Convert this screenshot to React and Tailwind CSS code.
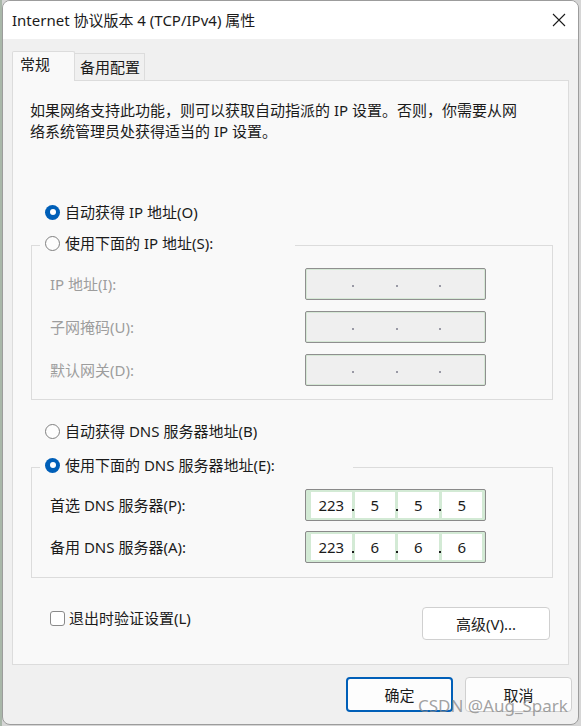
import React from 'react';

const font = "font-['Noto_Sans','Noto_Sans_CJK_SC',sans-serif]";

// Windows 11 style radio
const Radio = ({ checked }) =>
  checked ? (
    <span className="flex h-[15px] w-[15px] shrink-0 items-center justify-center rounded-full bg-[#005fb8]">
      <span className="h-[6px] w-[6px] rounded-full bg-white" />
    </span>
  ) : (
    <span className="h-[15px] w-[15px] shrink-0 rounded-full border border-[#808080] bg-[#fdfdfd]" />
  );

const RadioRow = ({ checked, label }) => (
  <div className="flex h-[22px] items-center gap-[5px]">
    <Radio checked={checked} />
    <span className="whitespace-nowrap leading-[22px] text-[#1b1b1b]">{label}</span>
  </div>
);

// IPv4 address box, four segments split by dots
const IpBox = ({ parts, disabled }) => {
  if (disabled) {
    return (
      <div className="flex h-[32px] w-[181px] items-center rounded-[2px] border border-[#8f8f8f] bg-[#efefef] pl-[5px] pr-[3px] shadow-[inset_0_0_0_1px_#d6e8d6]">
        {[0, 1, 2, 3].map((i) => (
          <React.Fragment key={i}>
            <span className="flex-1" />
            {i < 3 && <span className="mt-[4px] h-[2px] w-[2px] rounded-full bg-[#7d7d8c]" />}
          </React.Fragment>
        ))}
      </div>
    );
  }
  return (
    <div className="flex h-[32px] w-[181px] items-stretch rounded-[2px] border border-[#8a8a8a] bg-[#d3ead5] py-[2px] pl-[5px] pr-[3px]">
      {parts.map((p, i) => (
        <React.Fragment key={i}>
          <span className="flex flex-1 items-center justify-center bg-white leading-[20px] text-[#1b1b1b]">{p}</span>
          {i < 3 && (
            <span className="flex w-[3px] items-end justify-center pb-[7px]">
              <span className="h-[2px] w-[2px] bg-[#1b1b1b]" />
            </span>
          )}
        </React.Fragment>
      ))}
    </div>
  );
};

const FieldRow = ({ label, parts, disabled }) => (
  <div className="flex items-center">
    <span className={`w-[273px] whitespace-nowrap pl-[18px] leading-[22px] ${disabled ? 'text-[#9d9d9d]' : 'text-[#1b1b1b]'}`}>
      {label}
    </span>
    <IpBox parts={parts} disabled={disabled} />
  </div>
);

export default function App() {
  return (
    <div className={`relative h-[726px] w-[581px] overflow-hidden bg-[#d6d6d6] text-[15px] ${font}`}>
      <div className="absolute left-0 top-0 h-full w-[2px] bg-[#a9b7a9]" />
      <div className="ml-[2px] flex h-[725px] w-[577px] flex-col overflow-hidden rounded-[8px] border border-[#9c9c9c] bg-[#f0f0f0]">
        {/* title bar */}
        <div className="flex h-[38px] shrink-0 items-center justify-between bg-white pl-[9px] pr-[11px]">
          <span className="leading-[20px] text-[#1b1b1b]">Internet 协议版本 4 (TCP/IPv4) 属性</span>
          <svg width="14" height="14" viewBox="0 0 14 14" className="mr-[1px]">
            <path d="M1 1 L13 13 M13 1 L1 13" stroke="#1b1b1b" strokeWidth="1.1" fill="none" />
          </svg>
        </div>

        <div className="flex flex-col pl-[9px] pt-[12px]">
          {/* tabs */}
          <div className="flex items-end">
            <div className="relative z-10 -mb-[1px] h-[30px] w-[63px] rounded-t-[2px] border border-b-0 border-[#dcdcdc] bg-[#f9f9f9] pl-[7px] pt-[2px] leading-[20px] text-[#1b1b1b]">
              常规
            </div>
            <div className="h-[27px] w-[70px] border border-b-0 border-l-0 border-[#dcdcdc] bg-[#f0f0f0] pl-[5px] pt-[3px] leading-[20px] text-[#1b1b1b]">
              备用配置
            </div>
          </div>

          {/* panel */}
          <div className="flex w-[557px] flex-col border border-[#dcdcdc] bg-[#f9f9f9] pb-[24px]">
            <p className="whitespace-nowrap pl-[17px] pt-[19px] leading-[21px] text-[#1b1b1b]">
              如果网络支持此功能，则可以获取自动指派的 IP 设置。否则，你需要从网
              <br />
              络系统管理员处获得适当的 IP 设置。
            </p>

            <div className="ml-[32px] mt-[59px]">
              <RadioRow checked label="自动获得 IP 地址(O)" />
            </div>

            <fieldset className="ml-[18px] mt-[9px] w-[522px] border border-[#dcdcdc] p-0 pb-[13px]">
              <legend className="ml-[8px] h-[26px] w-[255px] p-0 pl-[5px]">
                <RadioRow label="使用下面的 IP 地址(S):" />
              </legend>
              <div className="flex flex-col gap-[11px] pt-[10px]">
                <FieldRow label="IP 地址(I):" disabled />
                <FieldRow label="子网掩码(U):" disabled />
                <FieldRow label="默认网关(D):" disabled />
              </div>
            </fieldset>

            <div className="ml-[32px] mt-[20px]">
              <RadioRow label="自动获得 DNS 服务器地址(B)" />
            </div>

            <fieldset className="ml-[18px] mt-[12px] w-[522px] border border-[#dcdcdc] p-0 pb-[14px]">
              <legend className="ml-[8px] h-[26px] w-[313px] p-0 pl-[5px]">
                <RadioRow checked label="使用下面的 DNS 服务器地址(E):" />
              </legend>
              <div className="flex flex-col gap-[10px] pt-[9px]">
                <FieldRow label="首选 DNS 服务器(P):" parts={['223', '5', '5', '5']} />
                <FieldRow label="备用 DNS 服务器(A):" parts={['223', '6', '6', '6']} />
              </div>
            </fieldset>

            <div className="mt-[29px] flex items-start justify-between pl-[37px] pr-[18px]">
              <label className="flex h-[21px] items-center gap-[4px] pt-[1px]">
                <span className="h-[15px] w-[15px] rounded-[3px] border border-[#8a8a8a] bg-white" />
                <span className="leading-[21px] text-[#1b1b1b]">退出时验证设置(L)</span>
              </label>
              <button className="h-[33px] w-[128px] rounded-[4px] border border-[#d0d0d0] bg-white leading-[20px] text-[#1b1b1b]">
                高级(V)...
              </button>
            </div>
          </div>
        </div>

        {/* dialog buttons */}
        <div className="mt-[12px] flex justify-end gap-[12px] pr-[6px]">
          <button className="h-[35px] w-[107px] rounded-[4px] border-2 border-[#005fb8] bg-[#fdfdfd] leading-[20px] text-[#1b1b1b]">
            确定
          </button>
          <button className="h-[35px] w-[107px] rounded-[4px] border border-[#d0d0d0] bg-[#fdfdfd] leading-[20px] text-[#1b1b1b]">
            取消
          </button>
        </div>
      </div>

      {/* watermark */}
      <span className="pointer-events-none absolute left-[418px] top-[695px] whitespace-nowrap text-[17px] leading-[22px] text-[#8a8a8a]/80">
        CSDN @Aug_Spark
      </span>
    </div>
  );
}
